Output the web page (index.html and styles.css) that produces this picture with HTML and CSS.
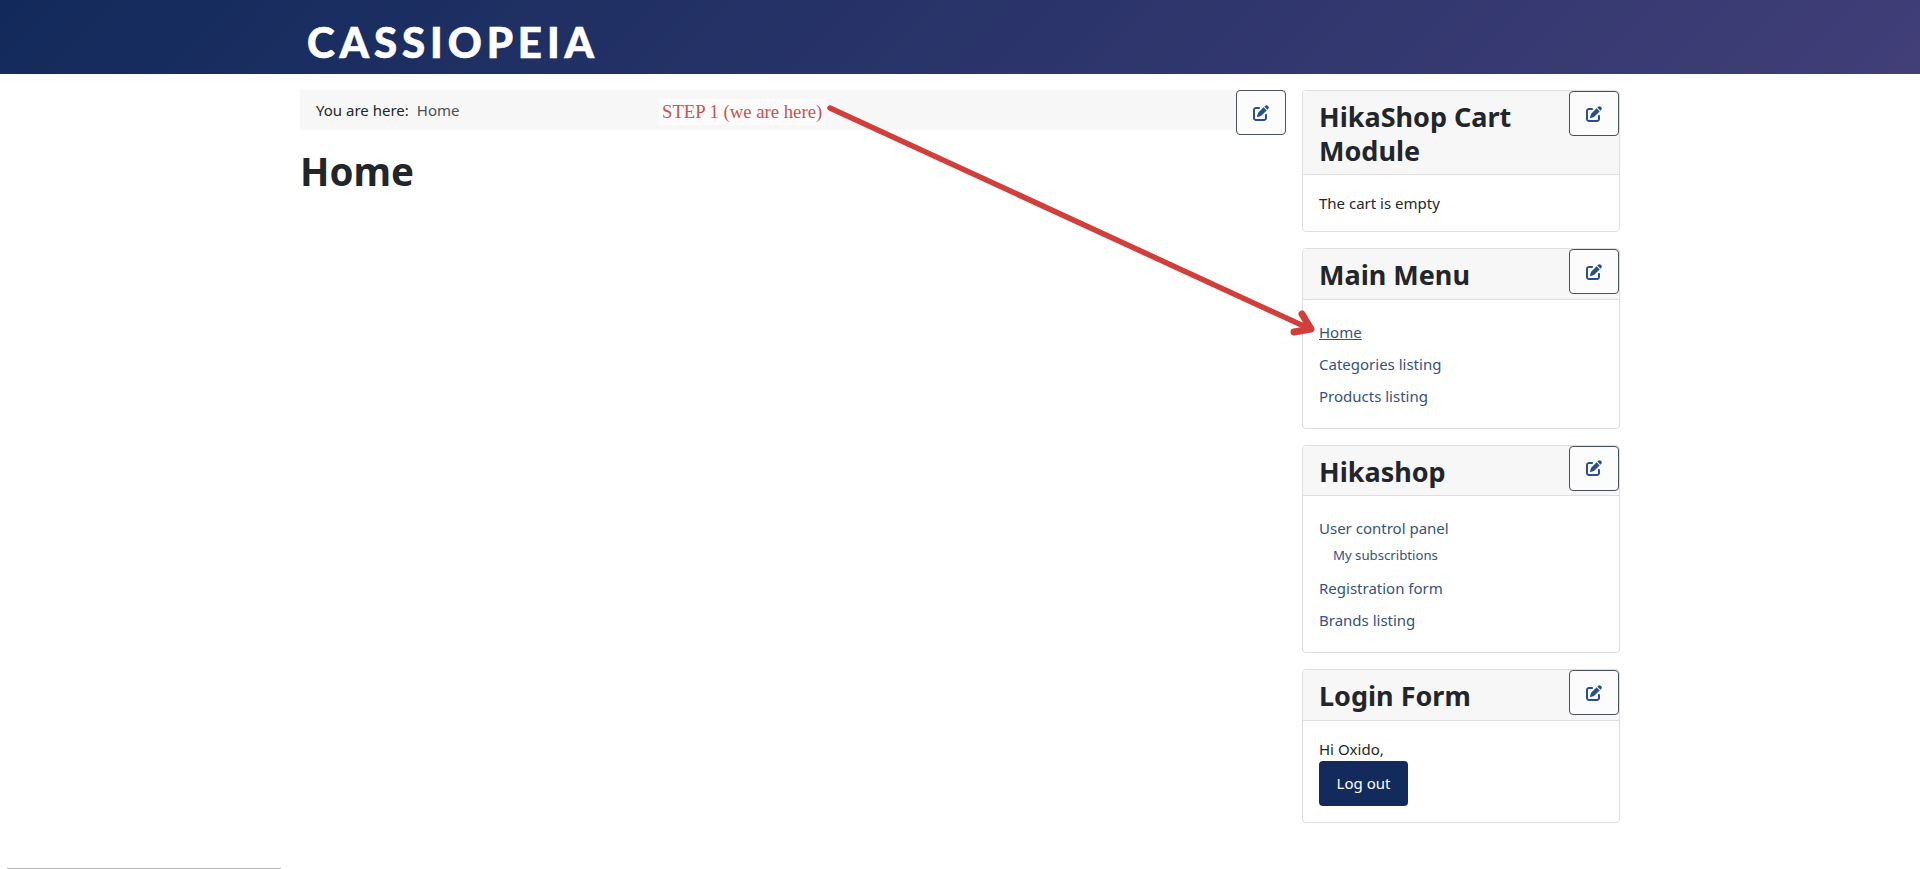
FILE: index.html
```html
<!DOCTYPE html>
<html lang="en">
<head>
    <title>Home - Cassiopeia</title>
    <meta charset="UTF-8">
    <link rel="stylesheet" href="styles.css">
</head>
<body>
    <svg width="0" height="0" class="iconDefs">
        <symbol id="editIcon" viewBox="0 0 512 512">
            <path d="M471.6 21.7c-21.9-21.9-57.3-21.9-79.2 0L362.3 51.7l97.9 97.9 30.1-30.1c21.9-21.9 21.9-57.3 0-79.2L471.6 21.7zm-299.2 220c-6.1 6.1-10.8 13.6-13.5 21.9l-29.6 88.8c-2.9 8.6-.6 18.1 5.8 24.6s15.9 8.7 24.6 5.8l88.8-29.6c8.2-2.7 15.7-7.4 21.9-13.5L437.7 172.3 339.7 74.3 172.4 241.7zM96 64C43 64 0 107 0 160V416c0 53 43 96 96 96H352c53 0 96-43 96-96V320c0-17.7-14.3-32-32-32s-32 14.3-32 32v96c0 17.7-14.3 32-32 32H96c-17.7 0-32-14.3-32-32V160c0-17.7 14.3-32 32-32h96c17.7 0 32-14.3 32-32s-14.3-32-32-32H96z"/>
        </symbol>
    </svg>
    <div id="mainheader"><div class="logo">CASSIOPEIA</div></div>
    <div id="wrapper">
        <div id="mainColumn">
            <div id="breadcrumbs">
                <span>You are here:</span>
                <span class="crumbHome">Home</span>
                <a class="editButton"><svg class="editIcon"><use href="#editIcon"></use></svg></a>
            </div>
            <h1>Home</h1>
        </div>
        <div id="sidebar">
            <div class="card">
                <div class="cardHeader">
                    <h3>HikaShop Cart Module</h3>
                    <a class="editButton"><svg class="editIcon"><use href="#editIcon"></use></svg></a>
                </div>
                <div class="cardBody">The cart is empty</div>
            </div>
            <div class="card">
                <div class="cardHeader">
                    <h3>Main Menu</h3>
                    <a class="editButton"><svg class="editIcon"><use href="#editIcon"></use></svg></a>
                </div>
                <ul class="cardBody menuList">
                    <li><a class="current">Home</a></li>
                    <li><a>Categories listing</a></li>
                    <li><a>Products listing</a></li>
                </ul>
            </div>
            <div class="card">
                <div class="cardHeader">
                    <h3>Hikashop</h3>
                    <a class="editButton"><svg class="editIcon"><use href="#editIcon"></use></svg></a>
                </div>
                <ul class="cardBody menuList">
                    <li><a>User control panel</a>
                        <ul class="subMenu"><li><a>My subscribtions</a></li></ul>
                    </li>
                    <li><a>Registration form</a></li>
                    <li><a>Brands listing</a></li>
                </ul>
            </div>
            <div class="card">
                <div class="cardHeader">
                    <h3>Login Form</h3>
                    <a class="editButton"><svg class="editIcon"><use href="#editIcon"></use></svg></a>
                </div>
                <div class="cardBody">
                    <div>Hi Oxido,</div>
                    <button class="logoutButton">Log out</button>
                </div>
            </div>
        </div>
    </div>
    <hr class="bottomLine">

    <!-- annotation drawn over the screenshot -->
    <div id="stepLabel">STEP 1 (we are here)</div>
    <svg id="stepArrow" width="1920" height="869" viewBox="0 0 1920 869">
        <path d="M830 108L1308 328" fill="none" stroke="#d23f3a" stroke-width="5.5" stroke-linecap="round"/>
        <path d="M1302 314L1311 329L1294 332" fill="none" stroke="#d23f3a" stroke-width="7" stroke-linecap="round" stroke-linejoin="round"/>
    </svg>
</body>
</html>
```

FILE: styles.css
```css
body {
    margin: 0;
    padding: 0;
    font-family: "Noto Sans", sans-serif;
    font-size: 15px;
    line-height: 24px;
    color: #22262a;
    background-color: #fff;
}

.iconDefs {
    position: absolute;
}

#mainheader {
    height: 74px;
    background: linear-gradient(135deg, #122a5b 0%, #413e78 100%);
}

.logo {
    width: 1320px;
    margin: 0 auto;
    padding-left: 7px;
    box-sizing: border-box;
    font-family: "Lato", sans-serif;
    font-weight: 900;
    font-size: 42px;
    line-height: 84px;
    letter-spacing: 4.9px;
    -webkit-text-stroke: 0.6px #fff;
    color: #fff;
}

#wrapper {
    display: flex;
    gap: 16px;
    width: 1320px;
    height: 794px;
    margin: 0 auto;
    padding-top: 16px;
    box-sizing: border-box;
}

#mainColumn {
    flex: 1;
}

#sidebar {
    display: flex;
    flex-direction: column;
    gap: 16px;
    width: 318px;
}

#breadcrumbs {
    position: relative;
    display: flex;
    gap: 8px;
    height: 40px;
    padding-left: 16px;
    align-items: center;
    background-color: #f7f7f7;
}

.crumbHome {
    color: #495057;
}

h1 {
    margin: 17px 0 0;
    font-size: 38.5px;
    line-height: 48px;
    font-weight: 700;
}

.card {
    position: relative;
    border: 1px solid #dfdfdf;
    border-radius: 4px;
}

.cardHeader {
    padding: 9px 16px 7px;
    background-color: #f7f7f7;
    border-bottom: 1px solid #dfdfdf;
    border-radius: 4px 4px 0 0;
}

h3 {
    margin: 0;
    padding-right: 30px;
    font-size: 27px;
    line-height: 33.6px;
    font-weight: 700;
}

.editButton {
    position: absolute;
    top: 0;
    right: 0;
    display: flex;
    align-items: center;
    justify-content: center;
    width: 50px;
    height: 45px;
    box-sizing: border-box;
    background-color: #fcfcfc;
    border: 1px solid #495057;
    border-radius: 4px;
}

.editIcon {
    width: 16px;
    height: 16px;
    fill: #274f8e;
}

.cardBody {
    margin: 0;
    padding: 16px;
}

.menuList {
    padding: 20px 16px 12px;
}

.menuList,
.subMenu {
    list-style: none;
}

.menuList li {
    margin-bottom: 8px;
}

.menuList a {
    color: #34527f;
}

.menuList a.current {
    text-decoration: underline;
}

.subMenu {
    margin: 0;
    padding: 3px 0 1px 14px;
    font-size: 13.2px;
}

.menuList .subMenu li {
    margin-bottom: 0;
}

.logoutButton {
    display: block;
    height: 45px;
    width: 89px;
    padding: 0;
    background-color: #132a5c;
    color: #fff;
    border: 0;
    border-radius: 4px;
    font: inherit;
}

.bottomLine {
    width: 274px;
    height: 1px;
    margin: 0 0 0 7px;
    border: 0;
    background-color: #b5b5b5;
}

#stepLabel {
    position: absolute;
    left: 659px;
    top: 99px;
    padding: 0 3px;
    font-family: "Liberation Serif", serif;
    font-size: 18.7px;
    line-height: 26px;
    color: #c8534f;
    background-color: #fbfbfb;
}

#stepArrow {
    position: absolute;
    left: 0;
    top: 0;
    pointer-events: none;
}
```
